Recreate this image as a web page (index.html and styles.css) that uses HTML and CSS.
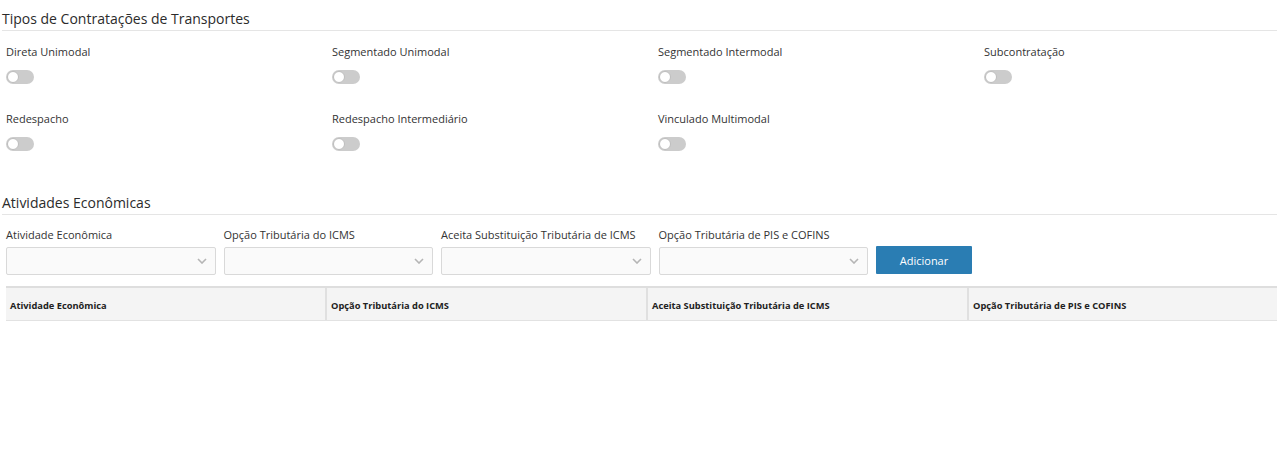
FILE: index.html
```html
<!DOCTYPE html>
<html lang="pt-BR">
<head>
<meta charset="utf-8">
<title>Tipos de Contratações</title>
<link rel="stylesheet" href="styles.css">
</head>
<body>
<div class="page">
  <section class="section">
    <h2 class="section-title">Tipos de Contratações de Transportes</h2>
    <div class="toggle-grid">
      <div class="field"><div class="label">Direta Unimodal</div><span class="toggle"><span class="knob"></span></span></div>
      <div class="field"><div class="label">Segmentado Unimodal</div><span class="toggle"><span class="knob"></span></span></div>
      <div class="field"><div class="label">Segmentado Intermodal</div><span class="toggle"><span class="knob"></span></span></div>
      <div class="field"><div class="label">Subcontratação</div><span class="toggle"><span class="knob"></span></span></div>
      <div class="field"><div class="label">Redespacho</div><span class="toggle"><span class="knob"></span></span></div>
      <div class="field"><div class="label">Redespacho Intermediário</div><span class="toggle"><span class="knob"></span></span></div>
      <div class="field"><div class="label">Vinculado Multimodal</div><span class="toggle"><span class="knob"></span></span></div>
    </div>
  </section>
  <section class="section section-2">
    <h2 class="section-title">Atividades Econômicas</h2>
    <div class="form-row">
      <div class="form-field"><div class="label">Atividade Econômica</div><div class="select"><svg class="chev" width="10" height="6" viewBox="0 0 10 6"><path d="M1 1 L5 5 L9 1" fill="none" stroke="#b5b5b5" stroke-width="1.6"/></svg></div></div>
      <div class="form-field"><div class="label">Opção Tributária do ICMS</div><div class="select"><svg class="chev" width="10" height="6" viewBox="0 0 10 6"><path d="M1 1 L5 5 L9 1" fill="none" stroke="#b5b5b5" stroke-width="1.6"/></svg></div></div>
      <div class="form-field"><div class="label">Aceita Substituição Tributária de ICMS</div><div class="select"><svg class="chev" width="10" height="6" viewBox="0 0 10 6"><path d="M1 1 L5 5 L9 1" fill="none" stroke="#b5b5b5" stroke-width="1.6"/></svg></div></div>
      <div class="form-field"><div class="label">Opção Tributária de PIS e COFINS</div><div class="select"><svg class="chev" width="10" height="6" viewBox="0 0 10 6"><path d="M1 1 L5 5 L9 1" fill="none" stroke="#b5b5b5" stroke-width="1.6"/></svg></div></div>
      <button class="btn" type="button">Adicionar</button>
    </div>
    <div class="table">
      <div class="th">Atividade Econômica</div>
      <div class="th">Opção Tributária do ICMS</div>
      <div class="th">Aceita Substituição Tributária de ICMS</div>
      <div class="th">Opção Tributária de PIS e COFINS</div>
    </div>
  </section>
</div>
</body>
</html>
```
FILE: styles.css
```css
* { box-sizing: border-box; }
html, body { margin: 0; padding: 0; background: #fff; }
body {
  font-family: "Open Sans", "Noto Sans", sans-serif;
  color: #333;
}
.page { padding: 0 0 0 2px; }
.section-title {
  margin: 0;
  font-size: 14px;
  font-weight: 400;
  color: #2b2b2b;
  line-height: 20px;
  padding-top: 9px;
  padding-bottom: 1px;
  border-bottom: 1px solid #e5e5e5;
}
.toggle-grid {
  display: grid;
  grid-template-columns: repeat(4, 326px);
  padding-left: 4px;
  padding-top: 13px;
  row-gap: 27px;
}
.label {
  font-size: 11px;
  line-height: 16px;
  color: #333;
}
.toggle {
  display: block;
  position: relative;
  width: 28px;
  height: 14px;
  margin-top: 10px;
  border-radius: 7px;
  background: #cccccc;
}
.knob {
  position: absolute;
  left: 1px;
  top: 1px;
  width: 12px;
  height: 12px;
  border-radius: 50%;
  background: #fff;
  border: 1px solid #bdbdbd;
}
.section-2 { margin-top: 42px; }
.section-2 .section-title { padding-top: 0; }
.form-row {
  display: flex;
  align-items: flex-end;
  gap: 8px;
  padding-left: 4px;
  padding-top: 12px;
}
.form-field { width: 209.5px; }
.form-field .label { margin-bottom: 4px; }
.select {
  height: 28px;
  border: 1px solid #d9d9d9;
  border-radius: 2px;
  background: #fafafa;
  display: flex;
  align-items: center;
  justify-content: flex-end;
  padding-right: 8px;
}
.btn {
  width: 96px;
  height: 28px;
  margin-bottom: 1px;
  border: none;
  border-radius: 1px;
  background: #2a7db3;
  color: #fff;
  font-family: inherit;
  font-size: 11px;
}
.table {
  display: grid;
  grid-template-columns: 319px 321px 321px 1fr;
  margin: 11px 0 0 4px;
  background: #f4f4f4;
  border-top: 2px solid #dedede;
  border-bottom: 1px solid #e2e2e2;
}
.th {
  font-size: 9.3px;
  font-weight: 700;
  color: #222;
  height: 32px;
  line-height: 28px;
  padding-top: 4px;
  padding-left: 4px;
  border-left: 2px solid #e0e0e0;
}
.th:first-child { border-left: none; }
```
